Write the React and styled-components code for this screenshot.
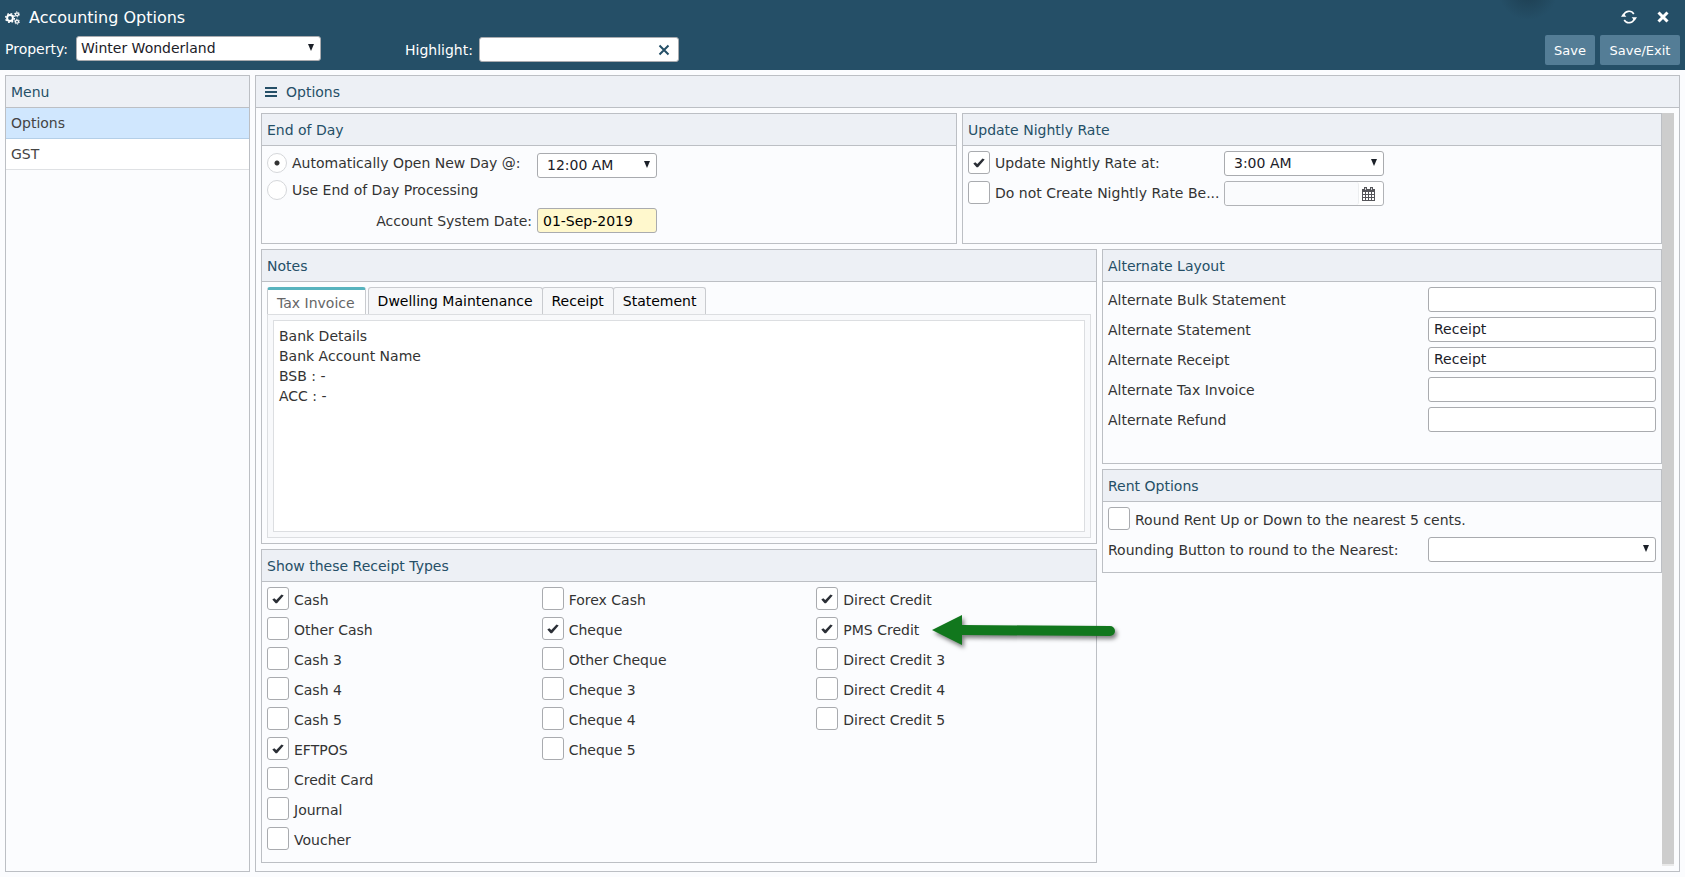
import styled, { createGlobalStyle } from "styled-components";

const RECEIPT_COLUMNS = [
  [
    { name: "Cash", checked: true },
    { name: "Other Cash" },
    { name: "Cash 3" },
    { name: "Cash 4" },
    { name: "Cash 5" },
    { name: "EFTPOS", checked: true },
    { name: "Credit Card" },
    { name: "Journal" },
    { name: "Voucher" },
  ],
  [
    { name: "Forex Cash" },
    { name: "Cheque", checked: true },
    { name: "Other Cheque" },
    { name: "Cheque 3" },
    { name: "Cheque 4" },
    { name: "Cheque 5" },
  ],
  [
    { name: "Direct Credit", checked: true },
    { name: "PMS Credit", checked: true, pointer: true },
    { name: "Direct Credit 3" },
    { name: "Direct Credit 4" },
    { name: "Direct Credit 5" },
  ],
];

const ALTERNATES = [
  { id: "alt-bulk", label: "Alternate Bulk Statement", value: "" },
  { id: "alt-statement", label: "Alternate Statement", value: "Receipt" },
  { id: "alt-receipt", label: "Alternate Receipt", value: "Receipt" },
  { id: "alt-invoice", label: "Alternate Tax Invoice", value: "" },
  { id: "alt-refund", label: "Alternate Refund", value: "" },
];

const TABS = ["Tax Invoice", "Dwelling Maintenance", "Receipt", "Statement"];

const NOTE = "Bank Details\nBank Account Name\nBSB : -\nACC : -";

// one large gear with two small ones to its right
const CogsIcon = () => (
  <svg width="15" height="14" viewBox="0 0 15 14" fill="none" stroke="currentColor">
    <circle cx="5" cy="7" r="2.900" strokeWidth="2" />
    <circle cx="5" cy="7" r="4.400" strokeWidth="1.400" strokeDasharray="1.728 1.728" />
    <circle cx="12" cy="3.300" r="1.500" strokeWidth="1.300" />
    <circle cx="12" cy="3.300" r="2.500" strokeWidth="0.900" strokeDasharray="1.309 1.309" />
    <circle cx="12" cy="10.700" r="1.500" strokeWidth="1.300" />
    <circle cx="12" cy="10.700" r="2.500" strokeWidth="0.900" strokeDasharray="1.309 1.309" />
  </svg>
);

const RefreshIcon = () => (
  <svg width="16" height="16" viewBox="0 0 16 16" fill="none" stroke="currentColor" strokeWidth="1.600">
    <path d="M2.600 6.500A5.600 5.600 0 0 1 12.800 5" />
    <path d="M13.400 9.500A5.600 5.600 0 0 1 3.200 11" />
    <path d="M0 7.800h5.400L2.300 4.200z" fill="currentColor" stroke="none" />
    <path d="M10.600 8.200H16l-2.300 3.600z" fill="currentColor" stroke="none" />
  </svg>
);

const CloseIcon = ({ size = 12, weight = 3 }) => (
  <svg width={size} height={size} viewBox="0 0 12 12" stroke="currentColor" strokeWidth={weight}>
    <path d="M1.500 1.500l9 9M10.500 1.500l-9 9" />
  </svg>
);

const MenuIcon = () => (
  <svg width="12" height="10" viewBox="0 0 12 10" fill="currentColor">
    <path d="M0 0h12v2H0zM0 4h12v2H0zM0 8h12v2H0z" />
  </svg>
);

const CalendarIcon = () => (
  <svg width="13" height="14" viewBox="0 0 13 14">
    <path d="M0 2h13v12H0z" fill="#55555a" />
    <path d="M2 0h3v4H2zM8 0h3v4H8z" fill="#55555a" />
    <path d="M3 1h1v2H3zM9 1h1v2H9z" fill="#d5d5d8" />
    <path
      d="M1 5h2v2H1zM4 5h2v2H4zM7 5h2v2H7zM10 5h2v2h-2zM1 8h2v2H1zM4 8h2v2H4zM7 8h2v2H7zM10 8h2v2h-2zM1 11h2v2H1zM4 11h2v2H4zM7 11h2v2H7zM10 11h2v2h-2z"
      fill="#fff"
    />
  </svg>
);

const CheckIcon = () => (
  <svg width="12" height="10" viewBox="0 0 12 10">
    <path d="M0.300 5.500L2.300 4.200 4.300 6 9.500 0.500 11.700 1.500 5 9.300H3.600z" fill="#2b2f36" />
  </svg>
);

const PointerArrow = () => (
  <Pointer width="190" height="44" viewBox="0 0 190 44" aria-hidden="true">
    <path d="M2 17L32 2v10l148 1a5 5 0 0 1 0 10l-148-1v10z" fill="#11771d" />
  </Pointer>
);

const CheckField = ({ id, label, checked, pointer }) => (
  <CheckRow>
    <Overlay>
      <CheckBox id={id} type="checkbox" defaultChecked={checked} />
      <CheckIcon />
    </Overlay>
    <CheckLabel htmlFor={id}>{label}</CheckLabel>
    {pointer && <PointerArrow />}
  </CheckRow>
);

const DropDown = ({ id, value, indent, label }) => (
  <SelectBox>
    <Select id={id} defaultValue={value} $indent={indent} aria-label={label}>
      <option>{value}</option>
    </Select>
    <svg width="6" height="7" viewBox="0 0 6 7" aria-hidden="true">
      <path d="M0 0h6L3 7z" fill="#1b2028" />
    </svg>
  </SelectBox>
);

const Panel = ({ title, height, children }) => (
  <PanelFrame $height={height}>
    <PanelTitle>{title}</PanelTitle>
    <PanelBody>{children}</PanelBody>
  </PanelFrame>
);

export default function App() {
  return (
    <Page>
      <GlobalStyle />
      <Header>
        <TitleBar>
          <CogsIcon />
          <h1>Accounting Options</h1>
          <IconButton aria-label="Refresh">
            <RefreshIcon />
          </IconButton>
          <IconButton aria-label="Close">
            <CloseIcon />
          </IconButton>
        </TitleBar>
        <Toolbar>
          <Property>
            <label htmlFor="property">Property:</label>
            <DropDown id="property" value="Winter Wonderland" />
          </Property>
          <Highlight>
            <label htmlFor="highlight">Highlight:</label>
            <SearchBox>
              <TextInput id="highlight" type="text" />
              <ClearButton aria-label="Clear highlight">
                <CloseIcon weight={2} />
              </ClearButton>
            </SearchBox>
          </Highlight>
          <Actions>
            <ActionButton>Save</ActionButton>
            <ActionButton>Save/Exit</ActionButton>
          </Actions>
        </Toolbar>
      </Header>

      <Workspace>
        <SideMenu>
          <PanelTitle>Menu</PanelTitle>
          <MenuItem href="#options" $active>
            Options
          </MenuItem>
          <MenuItem href="#gst">GST</MenuItem>
        </SideMenu>

        <Main>
          <PanelTitle>
            <MenuIcon />
            Options
          </PanelTitle>
          <ScrollArea>
            <Content>
              <TopRow>
                <Panel title="End of Day" height={131}>
                  <EndOfDay>
                    <RadioRow>
                      <Radio id="auto-open" type="radio" name="day" defaultChecked />
                      <label htmlFor="auto-open">Automatically Open New Day @:</label>
                    </RadioRow>
                    <DropDown value="12:00 AM" indent label="New day time" />
                    <RadioRow>
                      <Radio id="use-eod" type="radio" name="day" />
                      <label htmlFor="use-eod">Use End of Day Processing</label>
                    </RadioRow>
                    <DateLabel htmlFor="system-date">Account System Date:</DateLabel>
                    <DateInput id="system-date" type="text" defaultValue="01-Sep-2019" />
                  </EndOfDay>
                </Panel>
                <Panel title="Update Nightly Rate" height={131}>
                  <RateRow>
                    <CheckField id="update-rate" label="Update Nightly Rate at:" checked />
                    <DropDown value="3:00 AM" indent label="Nightly rate time" />
                  </RateRow>
                  <RateRow>
                    <CheckField id="no-rate" label="Do not Create Nightly Rate Be..." />
                    <DatePicker>
                      <input type="text" aria-label="Nightly rate start date" />
                      <button aria-label="Pick a date">
                        <CalendarIcon />
                      </button>
                    </DatePicker>
                  </RateRow>
                </Panel>
              </TopRow>

              <Columns>
                <Stack>
                  <Panel title="Notes" height={295}>
                    <Tabs role="tablist">
                      {TABS.map((tab, i) => (
                        <Tab key={tab} role="tab" aria-selected={i === 0} $active={i === 0}>
                          {tab}
                        </Tab>
                      ))}
                    </Tabs>
                    <TabContent>
                      <Notes aria-label="Tax Invoice note" defaultValue={NOTE} spellCheck={false} />
                    </TabContent>
                  </Panel>
                  <Panel title="Show these Receipt Types">
                    <ReceiptTypes>
                      {RECEIPT_COLUMNS.map((column) => (
                        <div key={column[0].name}>
                          {column.map(({ name, checked, pointer }) => (
                            <CheckField
                              key={name}
                              id={name.toLowerCase().replace(/ /g, "-")}
                              label={name}
                              checked={checked}
                              pointer={pointer}
                            />
                          ))}
                        </div>
                      ))}
                    </ReceiptTypes>
                  </Panel>
                </Stack>
                <Stack>
                  <Panel title="Alternate Layout" height={215}>
                    {ALTERNATES.map(({ id, label, value }) => (
                      <FieldRow key={id}>
                        <label htmlFor={id}>{label}</label>
                        <TextInput id={id} type="text" defaultValue={value} />
                      </FieldRow>
                    ))}
                  </Panel>
                  <Panel title="Rent Options">
                    <CheckField id="round-rent" label="Round Rent Up or Down to the nearest 5 cents." />
                    <FieldRow>
                      <label htmlFor="rounding">Rounding Button to round to the Nearest:</label>
                      <DropDown id="rounding" value="" />
                    </FieldRow>
                  </Panel>
                </Stack>
              </Columns>
            </Content>
            <ScrollTrack />
          </ScrollArea>
        </Main>
      </Workspace>
    </Page>
  );
}

const GlobalStyle = createGlobalStyle`
  * {
    box-sizing: border-box;
  }

  body {
    margin: 0;
    background-color: #fbfcfe;
    color: #333;
    font: 14px/20px "DejaVu Sans", Verdana, sans-serif;
  }

  button, input, select, textarea {
    margin: 0;
    font: inherit;
    color: inherit;
  }

  svg {
    display: block;
    flex: none;
  }
`;

const Page = styled.div`
  display: flex;
  flex-direction: column;
  min-height: 100vh;
`;

const Header = styled.header`
  padding: 0 5px 5px;
  color: #fff;
  background: radial-gradient(circle at calc(100% - 157px) -10px, #1f4256 8px, transparent 30px) #254f67;
`;

const TitleBar = styled.div`
  display: flex;
  align-items: center;
  height: 35px;

  h1 {
    flex: 1;
    margin: 0 0 0 9px;
    font-size: 16px;
    font-weight: 400;
  }
`;

const IconButton = styled.button`
  display: grid;
  place-items: center;
  width: 34px;
  height: 32px;
  padding: 0 0 2px;
  border: 0;
  background: none;
`;

const Toolbar = styled.div`
  display: flex;
  align-items: flex-start;
`;

const Property = styled.div`
  display: flex;
  flex: 0 0 400px;
  align-items: center;
  padding-top: 1px;

  label {
    flex: 0 0 71px;
  }

  select {
    width: 245px;
  }
`;

const Highlight = styled.div`
  display: flex;
  align-items: center;
  padding-top: 2px;

  label {
    flex: 0 0 74px;
  }
`;

const SearchBox = styled.div`
  display: grid;
  grid-template-columns: 170px 30px;

  input {
    grid-area: 1 / 1 / 2 / 3;
  }
`;

const ClearButton = styled.button`
  display: grid;
  grid-area: 1 / 2;
  place-items: center;
  padding: 0;
  border: 0;
  background: none;
  color: #254f67;
`;

const Actions = styled.div`
  display: flex;
  gap: 5px;
  margin-left: auto;
`;

const ActionButton = styled.button`
  min-width: 50px;
  height: 30px;
  padding: 1px 8px 0;
  border: 0;
  border-radius: 2px;
  background-color: #547d96;
  font-size: 13px;

  &:last-child {
    min-width: 80px;
  }
`;

const Workspace = styled.div`
  display: flex;
  flex: 1;
  gap: 5px;
  padding: 5px;
`;

const SideMenu = styled.nav`
  flex: 0 0 245px;
  border: 1px solid #bcbfc4;
`;

const PanelTitle = styled.h2`
  display: flex;
  align-items: center;
  gap: 9px;
  height: 32px;
  margin: 0;
  padding: 0 5px;
  border-bottom: 1px solid #bcbfc4;
  background-color: #edf0f5;
  color: #254f67;
  font-size: 14px;
  font-weight: 400;
`;

const MenuItem = styled.a`
  display: block;
  padding: 5px;
  border-bottom: 1px solid ${({ $active }) => ($active ? "#b4cfe8" : "#dfe1e4")};
  background-color: ${({ $active }) => ($active ? "#d0e7fe" : "#fff")};
  color: #444;
  text-decoration: none;
`;

const Main = styled.main`
  display: flex;
  flex: 1;
  flex-direction: column;
  min-width: 0;
  border: 1px solid #bcbfc4;

  > ${PanelTitle} {
    padding-left: 9px;
  }
`;

const ScrollArea = styled.div`
  display: flex;
  flex: 1;
  padding: 5px;
`;

const Content = styled.div`
  display: flex;
  flex: 1;
  flex-direction: column;
  gap: 5px;
  min-width: 0;
`;

const ScrollTrack = styled.div`
  width: 12px;
  border-bottom: 2px solid #e9e9e9;
  background-color: #cdcdcd;
`;

const TopRow = styled.div`
  display: grid;
  grid-template-columns: 174fr 175fr;
  gap: 5px;
`;

const Columns = styled.div`
  display: grid;
  grid-template-columns: 209fr 140fr;
  align-items: start;
  gap: 5px;
`;

const Stack = styled.div`
  display: flex;
  flex-direction: column;
  gap: 5px;
  min-width: 0;
`;

const PanelFrame = styled.section`
  display: flex;
  flex-direction: column;
  min-width: 0;
  min-height: ${({ $height }) => ($height ? `${$height}px` : "0")};
  border: 1px solid #bcbfc4;
`;

const PanelBody = styled.div`
  display: flex;
  flex: 1;
  flex-direction: column;
  padding: 5px;
`;

const Overlay = styled.span`
  display: inline-grid;
  place-items: center;

  > * {
    grid-area: 1 / 1;
  }

  svg {
    pointer-events: none;
    visibility: hidden;
  }

  input:checked + svg {
    visibility: visible;
  }
`;

const CheckBox = styled.input`
  appearance: none;
  width: 22px;
  height: 23px;
  border: 1px solid #a9abaf;
  border-radius: 3px;
  background-color: #fff;
`;

const CheckLabel = styled.label`
  padding-top: 3px;
  white-space: nowrap;
`;

const CheckRow = styled.div`
  position: relative;
  display: flex;
  align-items: flex-start;
  gap: 5px;
  height: 30px;
`;

// sits over the row and runs past the panel's edge
const Pointer = styled.svg`
  position: absolute;
  top: -4px;
  left: 114px;
  z-index: 1;
  filter: drop-shadow(2px 3px 2px rgba(0, 0, 0, 0.5));
  pointer-events: none;
`;

const SelectBox = styled.span`
  display: grid;
  align-items: center;
  height: 25px;

  > * {
    grid-area: 1 / 1;
  }

  svg {
    justify-self: end;
    margin: 0 7px 2px 0;
    pointer-events: none;
  }
`;

const Select = styled.select`
  appearance: none;
  width: 100%;
  height: 25px;
  padding: 0 20px 1px ${({ $indent }) => ($indent ? "9px" : "4px")};
  border: 1px solid #a9abaf;
  border-radius: 3px;
  background-color: #fff;
  color: #1b2028;
`;

const TextInput = styled.input`
  height: 25px;
  padding: 0 5px 2px;
  border: 1px solid #a9abaf;
  border-radius: 3px;
  background-color: #fff;
  color: #1b2028;
`;

const EndOfDay = styled.div`
  display: grid;
  grid-template-columns: 265px 120px;
  grid-template-rows: 27px 28px 25px;
  column-gap: 5px;
  padding-top: 2px;
`;

const RadioRow = styled.div`
  display: flex;
  grid-column: 1;
  align-items: flex-start;
  gap: 5px;
`;

const Radio = styled.input`
  appearance: none;
  width: 20px;
  height: 20px;
  border: 1px solid #d5d7da;
  border-radius: 50%;
  background-color: #fff;

  &:checked {
    background-image: radial-gradient(circle, #333 2px, transparent 3px);
  }
`;

const DateLabel = styled.label`
  grid-area: 3 / 1;
  align-self: center;
  text-align: right;
`;

const DateInput = styled(TextInput)`
  grid-area: 3 / 2;
  width: 120px;
  padding-bottom: 0;
  background-color: #fff8cd;
  color: #000;
`;

const RateRow = styled.div`
  display: grid;
  grid-template-columns: 251px 160px;
  align-items: start;
  gap: 5px;

  ${CheckLabel} {
    padding-top: 2px;
  }
`;

const DatePicker = styled.div`
  display: flex;
  height: 25px;
  border: 1px solid #b1b3b7;
  border-radius: 3px;
  background-color: #fff;

  input {
    flex: 1;
    min-width: 0;
    padding: 0 4px;
    border: 0;
    border-right: 1px solid #eceef0;
    border-radius: 3px;
    background-color: #fafbfd;
  }

  button {
    display: grid;
    place-items: center;
    width: 24px;
    padding: 0 5px 0 0;
    border: 0;
    background: none;
  }
`;

const Tabs = styled.div`
  display: flex;
`;

const Tab = styled.button`
  height: 27px;
  margin-right: ${({ $active }) => ($active ? "2px" : "-1px")};
  padding: ${({ $active }) => ($active ? "2px 10px 0 9px" : "0 9px")};
  border: 1px solid #c9cbcf;
  border-bottom: 0;
  border-top: ${({ $active }) => ($active ? "3px solid #57b3be" : "1px solid #c9cbcf")};
  border-radius: 3px 3px 0 0;
  background-color: ${({ $active }) => ($active ? "#fff" : "#f6f7f9")};
  color: ${({ $active }) => ($active ? "#666" : "#000")};
`;

const TabContent = styled.div`
  display: flex;
  flex: 1;
  padding: 5px;
  border: 1px solid #dcdee1;
  background-color: #f8f9fb;
`;

const Notes = styled.textarea`
  flex: 1;
  padding: 5px;
  border: 1px solid #dcdee1;
  background-color: #fff;
  resize: none;
`;

const ReceiptTypes = styled.div`
  display: grid;
  grid-template-columns: repeat(3, 1fr);
`;

const FieldRow = styled.div`
  display: grid;
  grid-template-columns: 1fr 228px;
  height: 30px;

  label {
    padding-top: 3px;
  }
`;
